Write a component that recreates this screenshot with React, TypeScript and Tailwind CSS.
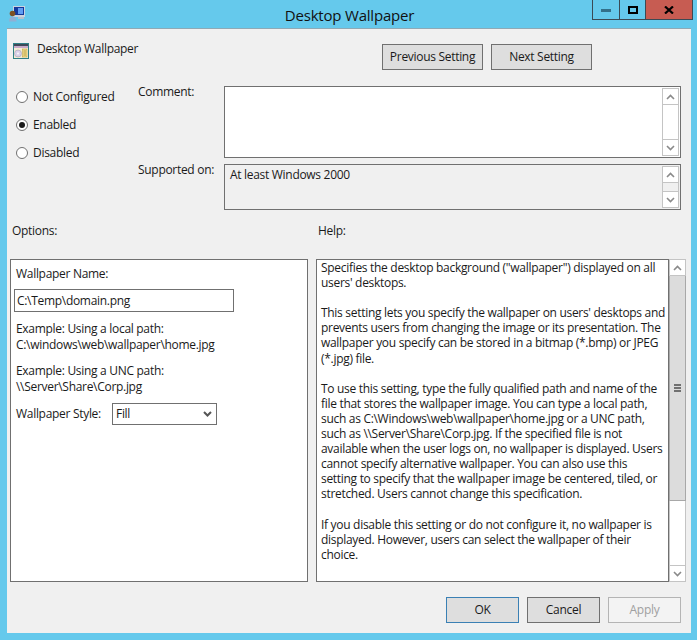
import React from 'react';

const helpText = `Specifies the desktop background ("wallpaper") displayed on all
users' desktops.

This setting lets you specify the wallpaper on users' desktops and
prevents users from changing the image or its presentation. The
wallpaper you specify can be stored in a bitmap (*.bmp) or JPEG
(*.jpg) file.

To use this setting, type the fully qualified path and name of the
file that stores the wallpaper image. You can type a local path,
such as C:\\Windows\\web\\wallpaper\\home.jpg or a UNC path,
such as \\\\Server\\Share\\Corp.jpg. If the specified file is not
available when the user logs on, no wallpaper is displayed. Users
cannot specify alternative wallpaper. You can also use this
setting to specify that the wallpaper image be centered, tiled, or
stretched. Users cannot change this specification.

If you disable this setting or do not configure it, no wallpaper is
displayed. However, users can select the wallpaper of their
choice.`;

const Chevron = ({ up }: { up?: boolean }) => (
  <svg width="9" height="6" viewBox="0 0 9 6" className="block">
    <path d={up ? 'M1 5L4.5 1.5L8 5' : 'M1 1L4.5 4.5L8 1'} fill="none" stroke="#8a8a8a" strokeWidth="1.6" />
  </svg>
);

const ArrowButton = ({ up }: { up?: boolean }) => (
  <div className="h-[17px] w-[17px] shrink-0 border border-[#c4c4c4] bg-white flex items-center justify-center">
    <Chevron up={up} />
  </div>
);

const Radio = ({ label, checked }: { label: string; checked?: boolean }) => (
  <div className="h-[28px] flex items-center gap-[5px]">
    <div className="w-[12px] h-[12px] rounded-full border border-[#707070] bg-white flex items-center justify-center">
      {checked && <div className="w-[6px] h-[6px] rounded-full bg-[#1a1a1a]" />}
    </div>
    <span>{label}</span>
  </div>
);

const DlgButton = ({ label, className }: { label: string; className?: string }) => (
  <div className={`h-[26px] w-[101px] border flex items-center justify-center ${className}`}>{label}</div>
);

const ReadBox = ({ className, children }: { className: string; children?: React.ReactNode }) => (
  <div className={`w-[457px] flex border border-[#707070] p-[1px] ${className}`}>
    <div className="flex-1 pl-[4px]">{children}</div>
    <div className="flex flex-col">
      <ArrowButton up />
      <div className="flex-1 border-x border-[#c4c4c4]" />
      <ArrowButton />
    </div>
  </div>
);

const App: React.FC = () => {
  return (
    <div
      className="w-[697px] h-[640px] bg-[#65c9ec] flex flex-col overflow-hidden text-[12px] text-[#1a1a1a]"
      style={{ fontFamily: '"Open Sans", "Noto Sans", sans-serif', letterSpacing: '-0.3px' }}
    >
      {/* title bar */}
      <div className="h-[28px] shrink-0 flex items-start relative">
        <svg width="16" height="16" viewBox="0 0 16 16" className="absolute left-[9px] top-[6px]">
          <rect x="4" y="0" width="12" height="11" fill="#c9d3de" />
          <rect x="5" y="1" width="10" height="8" fill="#14399a" />
          <rect x="9" y="2" width="5" height="6" fill="#5f9df2" />
          <rect x="9" y="11" width="6" height="2" fill="#b5c0cc" />
          <circle cx="3.5" cy="7.5" r="2.8" fill="#7d5224" />
          <path d="M0 15.5C0 12 1.5 10.5 3.8 10.5C6 10.5 7.5 12 7.5 15.5Z" fill="#8fb0d4" />
        </svg>
        <div className="flex-1 text-center text-[15px] pt-[4px] pl-[2px] text-[#111] tracking-[-0.2px]">Desktop Wallpaper</div>
        <div className="absolute right-[4px] top-0 h-[20px] flex border border-t-0 border-[#3b4a55] text-black">
          <div className="w-[27px] flex items-center justify-center border-r border-[#3b4a55]">
            <div className="w-[10px] h-[3px] mt-[2px] bg-[#33708a]" />
          </div>
          <div className="w-[26px] flex items-center justify-center border-r border-[#3b4a55]">
            <div className="w-[10px] h-[8px] border-2 border-black" />
          </div>
          <div className="w-[46px] bg-[#c75c52] flex items-center justify-center">
            <svg width="10" height="8" viewBox="0 0 10 8">
              <path d="M1 0.5L9 7.5M9 0.5L1 7.5" stroke="#000" strokeWidth="2.2" />
            </svg>
          </div>
        </div>
      </div>

      {/* dialog body */}
      <div className="ml-[7px] mr-[6px] mb-[7px] flex-1 bg-[#f0f0f0] border-t border-[#8fa9b5] flex flex-col">
        {/* heading */}
        <div className="h-[57px] flex shrink-0">
          <svg width="16" height="16" viewBox="0 0 16 16" className="ml-[6px] mt-[14px]">
            <rect x="0" y="0" width="16" height="16" fill="#2f7f86" />
            <rect x="1" y="1" width="14" height="2" fill="#3f4a58" />
            <rect x="1" y="3" width="14" height="2" fill="#c8a8c8" />
            <rect x="1" y="5" width="14" height="10" fill="#f3eed6" />
            <circle cx="5" cy="10.5" r="3.5" fill="#d9d0ea" stroke="#9a94a8" strokeWidth="0.5" />
            <circle cx="5" cy="10.5" r="1" fill="#f8f8f8" />
            <rect x="9.5" y="6" width="4.5" height="8" fill="#f2dc86" stroke="#b89a3a" strokeWidth="0.5" />
            <path d="M10.5 8H13M10.5 10H13M10.5 12H13" stroke="#a08a40" strokeWidth="0.7" />
          </svg>
          <div className="ml-[8px] mt-[11px] w-[345px]">Desktop Wallpaper</div>
          <div className="mt-[15px] flex gap-[8px]">
            <DlgButton label="Previous Setting" className="bg-[#dedede] border-[#707070]" />
            <DlgButton label="Next Setting" className="bg-[#dedede] border-[#707070]" />
          </div>
        </div>

        {/* state + comment */}
        <div className="h-[125px] flex shrink-0">
          <div className="w-[131px] pl-[9px] -mt-[3px]">
            <Radio label="Not Configured" />
            <Radio label="Enabled" checked />
            <Radio label="Disabled" />
          </div>
          <div className="flex-1 flex flex-col gap-[6px]">
            <div className="flex">
              <div className="w-[86px] leading-[12px]">Comment:</div>
              <ReadBox className="h-[72px] bg-white" />
            </div>
            <div className="flex">
              <div className="w-[86px] leading-[12px]">Supported on:</div>
              <ReadBox className="h-[46px] bg-[#f0f0f0]">At least Windows 2000</ReadBox>
            </div>
          </div>
        </div>

        {/* labels */}
        <div className="h-[48px] flex shrink-0 pt-[11px]">
          <div className="w-[311px] pl-[5px]">Options:</div>
          <div>Help:</div>
        </div>

        {/* option + help panes */}
        <div className="h-[323px] flex shrink-0 pl-[3px] gap-[8px]">
          <div className="w-[298px] border border-[#707070] bg-white pl-[5px] pt-[6px] leading-[16px]">
            <div>Wallpaper Name:</div>
            <div className="mt-[7px] w-[220px] h-[23px] border border-[#707070] pl-[2px] flex items-center -ml-[2px]">
              C:\Temp\domain.png
            </div>
            <div className="mt-[9px]">
              <div>Example: Using a local path:</div>
              <div>C:\windows\web\wallpaper\home.jpg</div>
            </div>
            <div className="mt-[10px]">
              <div>Example: Using a UNC path:</div>
              <div>\\Server\Share\Corp.jpg</div>
            </div>
            <div className="mt-[8px] flex items-center">
              <div className="w-[96px]">Wallpaper Style:</div>
              <div className="w-[105px] h-[22px] border border-[#707070] flex items-center justify-between px-[3px]">
                <span>Fill</span>
                <svg width="9" height="6" viewBox="0 0 9 6" className="mr-[1px]">
                  <path d="M1 1L4.5 4.5L8 1" fill="none" stroke="#555" strokeWidth="2" />
                </svg>
              </div>
            </div>
          </div>

          <div className="flex">
            <div className="w-[353px] border border-[#707070] bg-white pl-[4px] leading-[15.1px] whitespace-pre overflow-hidden">
              {helpText}
            </div>
            <div className="flex flex-col w-[17px]">
              <ArrowButton up />
              <div className="h-[225px] bg-[#dcdcdc] border border-t-0 border-[#a8a8a8] flex items-center justify-center">
                <div className="w-[7px] flex flex-col gap-[1px]">
                  <div className="h-[2px] bg-[#707070]" />
                  <div className="h-[2px] bg-[#707070]" />
                  <div className="h-[2px] bg-[#707070]" />
                </div>
              </div>
              <div className="flex-1 bg-white border-x border-[#c4c4c4]" />
              <ArrowButton />
            </div>
          </div>
        </div>

        {/* footer */}
        <div className="flex-1 flex justify-end items-start gap-[8px] pr-[10px] pt-[15px]">
          <DlgButton label="OK" className="!w-[73px] bg-[#dedede] border-[#3a80b4]" />
          <DlgButton label="Cancel" className="!w-[73px] bg-[#dedede] border-[#707070]" />
          <DlgButton label="Apply" className="!w-[73px] bg-[#f3f3f3] border-[#b4b4b4] text-[#a0a0a0]" />
        </div>
      </div>
    </div>
  );
};

export default App;
